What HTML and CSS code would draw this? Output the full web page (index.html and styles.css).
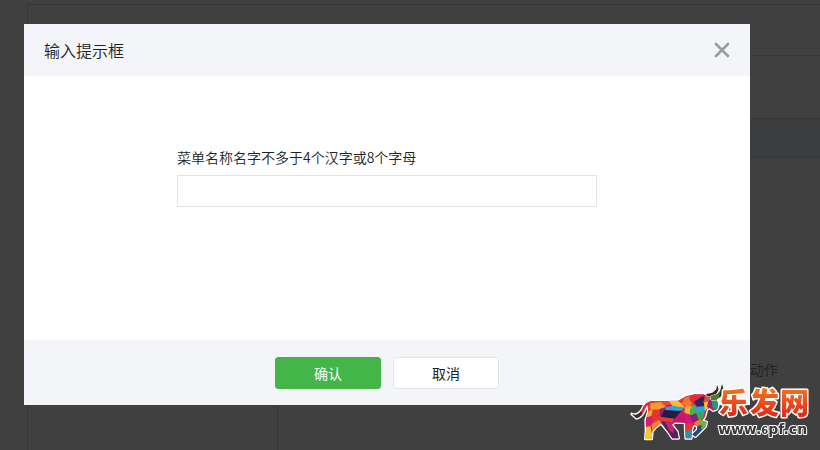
FILE: index.html
```html
<!DOCTYPE html>
<html lang="zh-CN">
<head>
<meta charset="utf-8">
<title>输入提示框</title>
<link rel="stylesheet" href="styles.css">
</head>
<body>
<main class="page">
  <section class="panel">
    <div class="panel-head"></div>
    <div class="panel-space"></div>
    <div class="panel-band"></div>
    <div class="panel-main">
      <div class="panel-side"></div>
      <div class="panel-content"><p class="panel-hint">动作</p></div>
    </div>
  </section>
</main>
<div class="overlay">
  <form class="dialog" role="dialog" aria-labelledby="dialog-title">
    <header class="dialog-head">
      <h1 class="dialog-title" id="dialog-title">输入提示框</h1>
      <button class="close" type="button" aria-label="关闭">
        <svg width="16" height="16" viewBox="0 0 16 16"><path d="M2 2L14 14M14 2L2 14" fill="none" stroke="#9b9c9f" stroke-width="2.6" stroke-linecap="round"/></svg>
      </button>
    </header>
    <div class="dialog-body">
      <div class="field">
        <label for="menu-name">菜单名称名字不多于4个汉字或8个字母</label>
        <input id="menu-name" type="text">
      </div>
    </div>
    <footer class="dialog-foot">
      <button class="btn btn-primary" type="submit">确认</button>
      <button class="btn" type="button">取消</button>
    </footer>
  </form>
</div>
<div class="watermark">
  <svg width="190" height="65" viewBox="0 0 190 65">
    <defs>
      <linearGradient id="fire" x1="0" y1="0" x2="0" y2="1">
        <stop offset="0.15" stop-color="#f47a20"/>
        <stop offset="0.9" stop-color="#e2231a"/>
      </linearGradient>
      <path id="bull" d="M76 64L128 63L160 62L184 49L210 43L236 43L250 47L270 50L276 62L280 76L276 88L264 92L254 84L246 88L240 110L232 122L245 126L242 140L228 154L211 170L202 163L216 150L217 138L206 134L200 150L199 175L182 175L180 128L150 127L140 134L157 155L161 175L142 175L128 154L108 130L92 142L82 154L80 177L61 177L63 150L62 120L70 96L68 76Z"/>
      <clipPath id="bull-clip"><use href="#bull"/></clipPath>
    </defs>
    <g transform="scale(.33333)">
      <g fill="#fff" stroke="#fff" stroke-width="8" stroke-linejoin="round">
        <use href="#bull"/>
        <path d="M80 64C62 64 56 78 51 88C44 102 31 107 20 102L34 115C46 112 55 102 59 91C63 80 68 74 78 74Z"/>
      </g>
      <path fill="#d92c45" d="M82 64C62 64 56 78 51 88C47 96 42 101 35 103L43 109C52 104 57 96 60 88C64 78 69 73 80 73Z"/>
      <path fill="#45262e" d="M20 102C31 107 42 104 48 94L53 101C48 109 42 113 34 115Z"/>
      <g clip-path="url(#bull-clip)">
        <path fill="#d71968" d="M55 40H285V180H55Z"/>
        <path fill="#e63a34" d="M64 60L130 60L118 84L88 110L62 96Z"/>
        <path fill="#f59b2d" d="M76 70L108 66L122 80L98 90L76 88Z"/>
        <path fill="#e64a30" d="M108 60L146 60L142 70L120 78Z"/>
        <path fill="#f9bd30" d="M132 63L164 60L180 84L142 78Z"/>
        <path fill="#28a6df" d="M118 83L144 77L178 84L164 95L121 91Z"/>
        <path fill="#f9a62d" d="M62 96L84 88L76 122L64 124Z"/>
        <path fill="#e23731" d="M84 90L110 88L112 122L92 146L76 122Z"/>
        <path fill="#d61b75" d="M64 112L80 108L92 142L72 152L58 140Z"/>
        <path fill="#f4ca30" d="M58 142L76 138L84 180H55Z"/>
        <path fill="#f0852b" d="M80 132L102 120L110 130L82 158Z"/>
        <path fill="#8a2379" d="M106 86L122 84L118 110L103 108Z"/>
        <path fill="#241b46" d="M118 90L170 93L148 117L108 110Z"/>
        <path fill="#ea3b35" d="M106 111L148 116L140 132L112 128Z"/>
        <path fill="#c4176c" d="M148 116L184 92L186 132L140 132Z"/>
        <path fill="#542260" d="M108 124L138 126L160 156L166 180H140Z"/>
        <path fill="#c4286a" d="M120 126L146 128L146 160L134 152Z"/>
        <path fill="#e63038" d="M156 60L184 46L212 42L206 72L184 82Z"/>
        <path fill="#f07a2b" d="M178 54L196 48L204 72L188 84L170 72Z"/>
        <path fill="#e02c3c" d="M198 42L240 40L226 58L204 74L192 56Z"/>
        <path fill="#32235d" d="M206 66L230 50L242 48L238 80L218 82Z"/>
        <path fill="#f6b52c" d="M180 80L202 78L194 106L178 98Z"/>
        <path fill="#4db04b" d="M194 90L206 72L218 84L208 106L196 110Z"/>
        <path fill="#25a7df" d="M216 80L244 78L238 97L210 100Z"/>
        <path fill="#d91675" d="M178 98L200 106L206 136L180 138Z"/>
        <path fill="#8b2078" d="M194 108L216 98L222 118L206 134Z"/>
        <path fill="#3ca84b" d="M212 98L240 94L234 116L222 120Z"/>
        <path fill="#e13730" d="M180 132L204 128L200 154L180 160Z"/>
        <path fill="#2895a9" d="M176 158L202 148V180H176Z"/>
        <path fill="#f0792d" d="M206 128L224 118L236 122L230 132L214 140Z"/>
        <path fill="#66b64a" d="M224 126L248 122L244 144L228 148Z"/>
        <path fill="#244c7b" d="M216 140L230 134L228 152L212 172L198 164Z"/>
        <path fill="#f5ca28" d="M236 64L254 52L250 84L240 92Z"/>
        <path fill="#ef4634" d="M240 42L262 48L250 64L236 68Z"/>
        <path fill="#9a226b" d="M250 62L262 56L266 78L254 88L246 80Z"/>
        <path fill="#259a72" d="M260 50L276 50L284 78L274 94L262 80Z"/>
      </g>
      <path fill="#3f241d" stroke="#fff" stroke-width="3" paint-order="stroke" d="M244 42L262 38L274 28L276 14L281 28L274 42L262 50L246 49Z"/>
      <path fill="#467b32" stroke="#fff" stroke-width="3" paint-order="stroke" d="M256 49L276 42L287 30L291 13L296 29L290 47L274 60L258 60Z"/>
      <path fill="#24351f" d="M286 32L291 13L296 29L290 47L281 54Z"/>
    </g>
    <g class="mark-name">
      <text x="94" y="34">乐</text>
      <text x="125" y="34">发</text>
      <text x="155" y="34">网</text>
    </g>
    <text class="mark-url" x="93" y="54">www.<tspan class="mark-digit">6</tspan>pf.cn</text>
  </svg>
</div>
</body>
</html>
```
FILE: styles.css
```css
* {
  box-sizing: border-box;
}

body {
  margin: 0;
  background: #fff;
  color: #222;
  font: 14px/20px "Noto Sans CJK SC", sans-serif;
  overflow: hidden;
}

.page {
  padding: 4px 0 0 27px;
}

.panel {
  display: flex;
  flex-direction: column;
  min-height: calc(100vh - 4px);
  border: solid #dcdcdf;
  border-width: 1px 0 0 1px;
}

.panel-head {
  height: 51px;
  border-bottom: 1px solid #dcdcdf;
}

.panel-space {
  height: 62px;
}

.panel-band {
  height: 40px;
  background: #eef4f9;
  border: solid #dcdcdf;
  border-width: 1px 0;
}

.panel-main {
  display: flex;
  flex: 1;
}

.panel-side {
  width: 250px;
  border-right: 1px solid #dcdcdf;
}

.panel-content {
  flex: 1;
  padding: 201px 42px 0 0;
  text-align: right;
}

.panel-hint {
  margin: 0;
  color: #8d8d8d;
}

.overlay {
  position: fixed;
  inset: 0;
  padding: 24px 70px 24px 24px;
  background: rgba(0, 0, 0, 0.75);
}

.dialog {
  background: #fff;
}

.dialog-head {
  display: flex;
  align-items: center;
  justify-content: space-between;
  padding: 0 20px;
  height: 52px;
  background: #f3f5f9;
}

.dialog-title {
  margin: 0;
  font-size: 16px;
  font-weight: 350;
}

.close {
  display: flex;
  padding: 0;
  border: 0;
  background: none;
}

.dialog-body {
  padding: 71px 20px 133px;
}

.field {
  display: grid;
  gap: 8px;
  max-width: 420px;
  margin: 0 auto;
}

.field label {
  font-weight: 350;
}

.field input {
  width: 100%;
  height: 32px;
  padding: 0 8px;
  border: 1px solid #e3e4e8;
  background: #fff;
  font: inherit;
}

.dialog-foot {
  display: flex;
  justify-content: center;
  gap: 12px;
  padding: 17px 20px 16px;
  background: #f3f5f9;
}

.btn {
  width: 106px;
  height: 32px;
  padding: 0;
  border: 1px solid #e3e4e8;
  border-radius: 3px;
  background: #fff;
  color: #222;
  font: inherit;
}

.btn-primary {
  border-color: #44b549;
  background: #44b549;
  color: #fff;
}

.watermark {
  position: fixed;
  right: 5px;
  bottom: 5px;
}

.watermark svg {
  display: block;
  overflow: visible;
}

.mark-name {
  fill: url(#fire);
  stroke: #fff;
  stroke-width: 3px;
  stroke-linejoin: round;
  paint-order: stroke;
  font: 900 29px "Noto Sans CJK SC", sans-serif;
}

.mark-url {
  fill: #39393b;
  stroke: #fff;
  stroke-width: 2px;
  stroke-linejoin: round;
  paint-order: stroke;
  font: bold 14px "DejaVu Sans", sans-serif;
}

.mark-digit {
  font-size: 10px;
}
```
